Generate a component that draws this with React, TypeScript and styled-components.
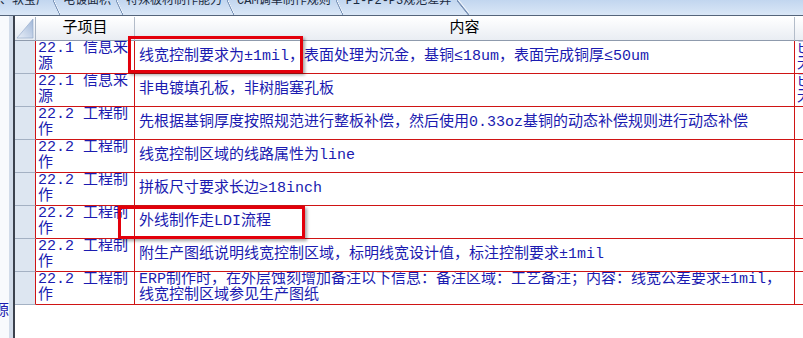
import React from "react";
import styled, { createGlobalStyle } from "styled-components";

const FONT = `"Liberation Mono", "Noto Sans CJK SC", monospace`;
const GRID_RED = "#cf1414";
const TEXT_BLUE = "#1b1bb0";

type Row = {
  group: string;
  content: React.ReactNode;
  extra?: React.ReactNode;
};

const tabs = ["、软宝厂", "电镀面积", "特殊板材制作能力", "CAM调单制作规则", "P1-P2-P3规范差异"];

const rows: Row[] = [
  {
    group: "22.1 信息来源",
    content: "线宽控制要求为±1mil，表面处理为沉金，基铜≤18um，表面完成铜厚≤50um",
    extra: (
      <>
        已执行
        <br />
        无异议
      </>
    ),
  },
  {
    group: "22.1 信息来源",
    content: "非电镀填孔板，非树脂塞孔板",
    extra: (
      <>
        已执行
        <br />
        无异议
      </>
    ),
  },
  { group: "22.2 工程制作", content: "先根据基铜厚度按照规范进行整板补偿，然后使用0.33oz基铜的动态补偿规则进行动态补偿" },
  { group: "22.2 工程制作", content: "线宽控制区域的线路属性为line" },
  { group: "22.2 工程制作", content: "拼板尺寸要求长边≥18inch" },
  { group: "22.2 工程制作", content: "外线制作走LDI流程" },
  { group: "22.2 工程制作", content: "附生产图纸说明线宽控制区域，标明线宽设计值，标注控制要求±1mil" },
  {
    group: "22.2 工程制作",
    content: (
      <>
        ERP制作时，在外层蚀刻增加备注以下信息：备注区域：工艺备注；内容：线宽公差要求±1mil，
        <br />
        线宽控制区域参见生产图纸
      </>
    ),
  },
];

const GlobalStyle = createGlobalStyle`
  html, body {
    margin: 0;
    padding: 0;
    background: #ffffff;
  }
  body {
    overflow: hidden;
  }
`;

export default function App() {
  return (
    <>
      <GlobalStyle />
      <Screen>
        <TabStrip>
          {tabs.map((t, i) => (
            <Tab key={t} $first={i === 0} $last={i === tabs.length - 1}>
              {t}
            </Tab>
          ))}
        </TabStrip>
        <Body>
          <SidePane>
            <SideText>源</SideText>
          </SidePane>
          <Splitter />
          <Grid>
            <Corner>
              <svg width="18" height="21" viewBox="0 0 18 21">
                <defs>
                  <linearGradient id="cornerFill" x1="1" y1="0" x2="0" y2="1">
                    <stop offset="0" stopColor="#9fb6d8" />
                    <stop offset="1" stopColor="#e9eff8" />
                  </linearGradient>
                </defs>
                <polygon points="17,1 17,20 1,20" fill="url(#cornerFill)" stroke="#8ea5c7" strokeWidth="0.6" />
              </svg>
            </Corner>
            <HeadCell>子项目</HeadCell>
            <HeadCell>内容</HeadCell>
            <HeadCell />
            {rows.map((r, i) => (
              <React.Fragment key={i}>
                <Indicator />
                <Cell $kind="group">
                  <span>{r.group}</span>
                </Cell>
                <Cell $kind="content">
                  <span>{r.content}</span>
                </Cell>
                <Cell $kind="extra">
                  <span>{r.extra}</span>
                </Cell>
              </React.Fragment>
            ))}
          </Grid>
        </Body>
        <Highlight $x={128} $y={36} $w={175} $h={37} />
        <Highlight $x={118} $y={206} $w={187} $h={33} />
      </Screen>
    </>
  );
}

const Screen = styled.div`
  position: relative;
  width: 803px;
  height: 338px;
  overflow: hidden;
  background: #ffffff;
  display: flex;
  flex-direction: column;
  font-family: ${FONT};
`;

const TabStrip = styled.div`
  flex: none;
  height: 15px;
  overflow: hidden;
  display: flex;
  align-items: flex-start;
  background: linear-gradient(#c2d6ef, #dae7f7);
  border-bottom: 1px solid #55657b;
`;

const Tab = styled.div<{ $first?: boolean; $last?: boolean }>`
  position: relative;
  margin-top: -6px;
  line-height: 15px;
  font-size: 12px;
  color: #1a2a40;
  white-space: nowrap;
  padding: 0 ${({ $last }) => ($last ? 14 : 8)}px 0 ${({ $first }) => ($first ? 0 : 7)}px;

  &::before {
    content: "";
    display: ${({ $first }) => ($first ? "none" : "block")};
    position: absolute;
    left: -3px;
    top: 6px;
    width: 7px;
    height: 15px;
    background: linear-gradient(
      to top right,
      transparent 44%,
      #7e97ba 47%,
      #7e97ba 52%,
      #ffffff 55%,
      transparent 60%
    );
  }

  &::after {
    content: "";
    display: ${({ $last }) => ($last ? "block" : "none")};
    position: absolute;
    right: -4px;
    top: 6px;
    width: 12px;
    height: 15px;
    background: linear-gradient(
      to top right,
      transparent 44%,
      #7891b6 47%,
      #7891b6 51%,
      #f4f8fd 55%,
      transparent 62%
    );
  }
`;

const Body = styled.div`
  flex: 1;
  min-height: 0;
  display: flex;
  align-items: stretch;
`;

const SidePane = styled.div`
  flex: none;
  width: 9px;
  display: flex;
  justify-content: flex-end;
  align-items: flex-end;
  padding-bottom: 18px;
  background: #f8fafd;
  border-right: 4px solid #d2dcea;
  overflow: hidden;
`;

const SideText = styled.span`
  font-size: 15px;
  line-height: 16px;
  color: ${TEXT_BLUE};
  white-space: nowrap;
`;

const Splitter = styled.div`
  flex: none;
  width: 2px;
  background: #3b424e;
`;

const Grid = styled.div`
  flex: none;
  align-self: flex-start;
  margin-top: 1px;
  display: grid;
  grid-template-columns: 21px 99px 660px 80px;
  grid-template-rows: 24px repeat(8, 33px);
`;

const Corner = styled.div`
  box-sizing: border-box;
  display: flex;
  align-items: center;
  justify-content: center;
  background: linear-gradient(#fbfcfe, #e4eaf2);
  border-right: 1px solid #a8b3c3;
  border-bottom: 1px solid #8f9bad;
`;

const HeadCell = styled.div`
  box-sizing: border-box;
  display: flex;
  align-items: center;
  justify-content: center;
  background: linear-gradient(#ffffff, #e9edf3);
  border-right: 1px solid #b3bcc9;
  border-bottom: 1px solid #8f9bad;
  font-size: 15px;
  line-height: 16px;
  color: #000000;
`;

const Indicator = styled.div`
  box-sizing: border-box;
  background: #dde6f1;
  border-right: 1px solid ${GRID_RED};
  border-bottom: 1px solid #a4b1c3;
`;

const Cell = styled.div<{ $kind: "group" | "content" | "extra" }>`
  box-sizing: border-box;
  display: flex;
  align-items: center;
  overflow: hidden;
  padding: ${({ $kind }) =>
    $kind === "group" ? "0 4px 0 2px" : $kind === "content" ? "0 4px 0 4px" : "0 0 0 2px"};
  border-right: 1px solid ${GRID_RED};
  border-bottom: 1px solid ${GRID_RED};
  font-size: 15px;
  line-height: 16px;
  color: ${TEXT_BLUE};
  white-space: ${({ $kind }) => ($kind === "extra" ? "nowrap" : "normal")};
`;

const Highlight = styled.div<{ $x: number; $y: number; $w: number; $h: number }>`
  position: absolute;
  left: ${({ $x }) => $x}px;
  top: ${({ $y }) => $y}px;
  width: ${({ $w }) => $w}px;
  height: ${({ $h }) => $h}px;
  box-sizing: border-box;
  border: 3px solid #e3000b;
  box-shadow: 2px 2px 3px rgba(0, 0, 0, 0.35);
  pointer-events: none;
`;
